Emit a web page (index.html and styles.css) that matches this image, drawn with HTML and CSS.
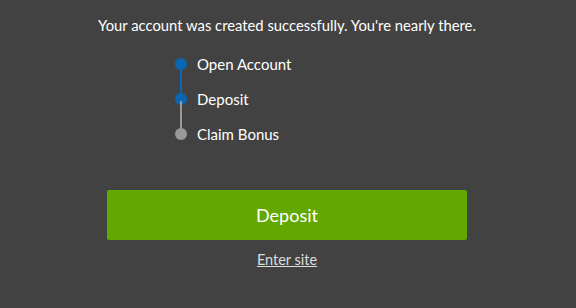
FILE: index.html
```html
<!DOCTYPE html>
<html lang="en">
<head>
    <meta charset="UTF-8">
    <title>Account created</title>
    <link rel="stylesheet" href="styles.css">
</head>
<body>
    <div class="panel">
        <p class="message">Your account was created successfully. You're nearly there.</p>
        <ul class="steps">
            <li class="step done">Open Account</li>
            <li class="step current">Deposit</li>
            <li class="step">Claim Bonus</li>
        </ul>
        <button class="deposit">Deposit</button>
        <a class="enter" href="#">Enter site</a>
    </div>
</body>
</html>
```
FILE: styles.css
```css
* {
    box-sizing: border-box;
    margin: 0;
    padding: 0;
}

body {
    background: #424242;
    font-family: Lato, "Open Sans", sans-serif;
    color: #fff;
}

.panel {
    width: 574px;
    height: 308px;
    display: flex;
    flex-direction: column;
    align-items: center;
    padding-top: 15px;
}

.message {
    font-size: 14.8px;
    line-height: 20px;
}

.steps {
    list-style: none;
    align-self: flex-start;
    margin-left: 175px;
    margin-top: 19px;
}

.step {
    position: relative;
    height: 35px;
    line-height: 20px;
    padding-left: 22px;
    font-size: 15px;
}

.step::before {
    content: "";
    position: absolute;
    left: 0;
    top: 4px;
    width: 12px;
    height: 12px;
    border-radius: 50%;
    background: #999;
}

.step::after {
    content: "";
    position: absolute;
    left: 5px;
    top: 12px;
    width: 2px;
    height: 35px;
    background: #999;
}

.step:last-child::after { display: none; }

.step.done::before,
.step.current::before { background: #0a66b3; }
.step.done::after { background: #0a66b3; }

.deposit {
    margin-top: 31px;
    width: 360px;
    height: 50px;
    border: none;
    border-radius: 2px;
    background: #62a800;
    color: #fff;
    font-family: inherit;
    font-size: 18px;
    cursor: pointer;
}

.enter {
    margin-top: 10px;
    color: #ddd;
    font-size: 14.5px;
    line-height: 20px;
}
```
